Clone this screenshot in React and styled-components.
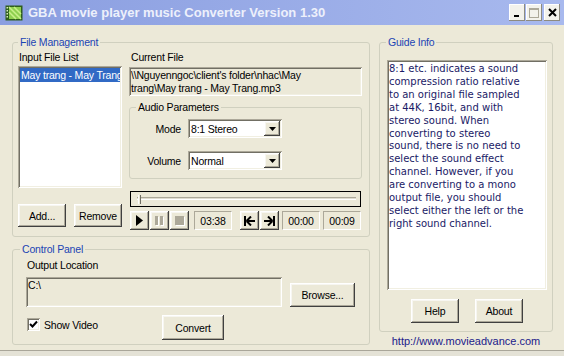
import React from "react";
import styled, { createGlobalStyle, css } from "styled-components";

const GlobalStyle = createGlobalStyle`
  html, body {
    margin: 0;
    padding: 0;
    background: #ece9d8;
  }
  body {
    font-family: "Liberation Sans", Arial, sans-serif;
    font-size: 10.5px;
    letter-spacing: -0.2px;
    color: #000;
  }
  * {
    box-sizing: border-box;
  }
`;

const raised = css`
  background: #ece9d8;
  border: none;
  box-shadow: inset -1px -1px #404040, inset 1px 1px #ffffff,
    inset -2px -2px #aca899, inset 2px 2px #f7f6f1;
`;

const sunken = css`
  border: none;
  box-shadow: inset 1px 1px #aca899, inset -1px -1px #ffffff,
    inset 2px 2px #716f64, inset -2px -2px #f1efe2;
`;

const Window = styled.div`
  width: 564px;
  height: 356px;
  overflow: hidden;
  display: flex;
  flex-direction: column;
  background: #ece9d8;
`;

const TitleBar = styled.div`
  height: 25px;
  flex: none;
  display: flex;
  align-items: center;
  padding: 0 4px 0 5px;
  background: linear-gradient(to right, #8a9ee0, #a8b9ee);
`;

const TitleText = styled.div`
  flex: 1;
  margin-left: 5px;
  color: #edf0fb;
  font: bold 13px "Liberation Sans", Arial, sans-serif;
  letter-spacing: 0;
`;

const CaptionButtons = styled.div`
  display: flex;
  gap: 1px;
`;

const CaptionButton = styled.div`
  width: 16px;
  height: 17px;
  display: flex;
  align-items: center;
  justify-content: center;
  margin-left: ${(p) => p.$gap || 0}px;
  background: #f3f2ec;
  box-shadow: inset -1px -1px #8d8b80, inset 1px 1px #ffffff;
`;

const Body = styled.div`
  display: flex;
  gap: 9px;
  padding: 11px 11px 0 12px;
`;

const BottomEdge = styled.div`
  margin-top: auto;
  height: 6px;
  border-top: 1px solid #a9a699;
  background: #e4e2d6;
`;

const LeftCol = styled.div`
  width: 358px;
  display: flex;
  flex-direction: column;
  gap: 6px;
`;

const RightCol = styled.div`
  width: 174px;
  display: flex;
  flex-direction: column;
`;

const GroupBox = styled.fieldset`
  margin: 0;
  min-width: 0;
  border: 1px solid #d0d0bf;
  border-radius: 3px;
  height: ${(p) => p.$h}px;
  padding: ${(p) => p.$pad};
`;

const Legend = styled.legend`
  padding: 0 2px;
  margin-left: ${(p) => p.$shift || 0}px;
  line-height: 13px;
  height: 13px;
  color: ${(p) => p.$color || "#1b44b4"};
`;

const FileGrid = styled.div`
  display: grid;
  grid-template-columns: 104px 233px;
  column-gap: 7px;
`;

const Column = styled.div`
  display: flex;
  flex-direction: column;
`;

const Label = styled.div`
  line-height: 13px;
  height: 13px;
  margin-left: ${(p) => p.$indent || 0}px;
`;

const ListBox = styled.div`
  ${sunken};
  background: #fff;
  height: 122px;
  margin-top: 2px;
  padding: 2px;
  overflow: hidden;
`;

const ListItem = styled.div`
  height: 14px;
  line-height: 14px;
  padding-left: 1px;
  white-space: nowrap;
  overflow: hidden;
  background: ${(p) => (p.$selected ? "#316ac5" : "transparent")};
  color: ${(p) => (p.$selected ? "#fff" : "#000")};
`;

const ButtonRow = styled.div`
  display: flex;
  justify-content: ${(p) => p.$justify || "flex-start"};
  gap: ${(p) => p.$gap || 8}px;
  margin-top: ${(p) => p.$top || 0}px;
`;

const Button = styled.button`
  ${raised};
  width: ${(p) => p.$w}px;
  height: ${(p) => p.$h || 23}px;
  margin-left: ${(p) => p.$left || 0}px;
  padding: 0;
  font: 10.5px "Liberation Sans", Arial, sans-serif;
  letter-spacing: -0.2px;
  color: #000;
  flex: none;
`;

const ReadBox = styled.div`
  ${sunken};
  background: #ece9d8;
  width: ${(p) => p.$w || "auto"};
  height: ${(p) => p.$h}px;
  margin-top: ${(p) => p.$top || 0}px;
  margin-left: ${(p) => p.$left || 0}px;
  padding: 2px 2px;
  line-height: 13px;
  white-space: pre;
  overflow: hidden;
`;

const ParamRow = styled.div`
  display: grid;
  grid-template-columns: 45px 94px;
  column-gap: 7px;
  align-items: center;
  margin-top: ${(p) => p.$top || 0}px;
`;

const ParamLabel = styled.div`
  text-align: right;
`;

const Combo = styled.div`
  ${sunken};
  background: #fff;
  height: 19px;
  display: flex;
  align-items: center;
  padding: 2px;
`;

const ComboText = styled.div`
  flex: 1;
  padding-left: 1px;
`;

const ComboArrow = styled.div`
  ${raised};
  width: 16px;
  height: 15px;
  display: flex;
  align-items: center;
  justify-content: center;
`;

const Slider = styled.div`
  position: relative;
  width: 231px;
  height: 16px;
  margin: 12px 0 0 1px;
  border: 1px solid #000;
  background: #ece9d8;
`;

const Groove = styled.div`
  position: absolute;
  left: 6px;
  right: 4px;
  top: 5px;
  height: 3px;
  border-top: 1px solid #aca899;
  border-bottom: 1px solid #fff;
  background: #e0ddd0;
`;

const Thumb = styled.div`
  position: absolute;
  left: 7px;
  top: 3px;
  width: 3px;
  height: 9px;
  border-left: 1px solid #fff;
  border-right: 1px solid #716f64;
  background: #ece9d8;
`;

const Controls = styled.div`
  display: flex;
  align-items: center;
  margin: 4px 0 0 1px;
  height: 19px;
`;

const PlayerButton = styled.div`
  ${raised};
  width: 19px;
  height: 19px;
  margin-left: ${(p) => p.$left || 0}px;
  display: flex;
  align-items: center;
  justify-content: center;
  flex: none;
`;

const TimeBox = styled.div`
  width: 38px;
  height: 19px;
  margin-left: ${(p) => p.$left || 0}px;
  border: 1px solid;
  border-color: #aca899 #fff #fff #aca899;
  display: flex;
  align-items: center;
  justify-content: center;
  flex: none;
`;

const OutputRow = styled.div`
  display: flex;
  align-items: flex-end;
  margin-top: 5px;
`;

const OptionRow = styled.div`
  display: flex;
  align-items: flex-start;
  margin-top: 8px;
`;

const CheckWrap = styled.label`
  width: 136px;
  display: flex;
  align-items: center;
  gap: 4px;
  margin-top: 3px;
  padding-left: 1px;
`;

const CheckBox = styled.span`
  ${sunken};
  width: 13px;
  height: 13px;
  background: #fff;
  display: flex;
  align-items: center;
  justify-content: center;
`;

const GuideBox = styled.div`
  ${sunken};
  background: #fff;
  height: 230px;
  padding: 3px 2px;
  font-family: "DejaVu Sans", Verdana, sans-serif;
  font-size: 10px;
  letter-spacing: 0;
  line-height: 12.9px;
  color: #1a1a66;
  white-space: pre;
  overflow: hidden;
`;

const SiteLink = styled.div`
  text-align: center;
  margin-top: 3px;
  font-size: 11px;
  letter-spacing: 0;
  color: #20208a;
`;

const guideText = [
  "8:1 etc. indicates a sound",
  "compression ratio relative",
  "to an original file sampled",
  "at 44K, 16bit, and with",
  "stereo sound. When",
  "converting to stereo",
  "sound, there is no need to",
  "select the sound effect",
  "channel. However, if you",
  "are converting to a mono",
  "output file, you should",
  "select either the left or the",
  "right sound channel.",
].join("\n");

function AppIcon() {
  return (
    <svg width="18" height="16" viewBox="0 0 18 16">
      <rect x="0.5" y="0.5" width="17" height="15" fill="#2f5e1c" />
      <rect x="4" y="2" width="12" height="12" fill="#8fd050" />
      <path d="M4 2 L16 14 M9 2 L16 9 M4 7 L11 14" stroke="#c8f08a" strokeWidth="1.5" />
      {[2, 5, 8, 11].map((y) => (
        <rect key={y} x="1.5" y={y} width="1.5" height="1.5" fill="#d8e8c0" />
      ))}
    </svg>
  );
}

function Arrow() {
  return (
    <svg width="7" height="4" viewBox="0 0 7 4">
      <path d="M0 0 H7 L3.5 4 Z" fill="#000" />
    </svg>
  );
}

function App() {
  return (
    <Window>
      <GlobalStyle />
      <TitleBar>
        <AppIcon />
        <TitleText>GBA movie player music Converter Version 1.30</TitleText>
        <CaptionButtons>
          <CaptionButton>
            <svg width="8" height="10" viewBox="0 0 8 10">
              <rect x="1" y="7" width="5" height="2" fill="#000" />
            </svg>
          </CaptionButton>
          <CaptionButton>
            <svg width="10" height="10" viewBox="0 0 10 10">
              <rect x="0.5" y="0.5" width="9" height="9" fill="none" stroke="#aca899" />
              <rect x="0.5" y="0.5" width="9" height="1.5" fill="#aca899" />
            </svg>
          </CaptionButton>
          <CaptionButton $gap={1}>
            <svg width="9" height="9" viewBox="0 0 9 9">
              <path d="M1 1 L8 8 M8 1 L1 8" stroke="#000" strokeWidth="2" />
            </svg>
          </CaptionButton>
        </CaptionButtons>
      </TitleBar>

      <Body>
        <LeftCol>
          <GroupBox $h={201} $pad="2px 7px 0 5px">
            <Legend>File Management</Legend>
            <FileGrid>
              <Column>
                <Label $indent={1}>Input File List</Label>
                <ListBox>
                  <ListItem $selected>May trang - May Trang</ListItem>
                </ListBox>
                <ButtonRow $top={16}>
                  <Button $w={48}>Add...</Button>
                  <Button $w={48}>Remove</Button>
                </ButtonRow>
              </Column>
              <Column>
                <Label $indent={2}>Current File</Label>
                <ReadBox $h={29} $top={3}>
                  {"\\\\Nguyenngoc\\client's folder\\nhac\\May\ntrang\\May trang - May Trang.mp3"}
                </ReadBox>
                <GroupBox $h={78} $pad="5px 6px 0 6px" style={{ marginTop: 5 }}>
                  <Legend $color="#000">Audio Parameters</Legend>
                  <ParamRow>
                    <ParamLabel>Mode</ParamLabel>
                    <Combo>
                      <ComboText>8:1 Stereo</ComboText>
                      <ComboArrow>
                        <Arrow />
                      </ComboArrow>
                    </Combo>
                  </ParamRow>
                  <ParamRow $top={13}>
                    <ParamLabel>Volume</ParamLabel>
                    <Combo>
                      <ComboText>Normal</ComboText>
                      <ComboArrow>
                        <Arrow />
                      </ComboArrow>
                    </Combo>
                  </ParamRow>
                </GroupBox>
                <Slider>
                  <Groove />
                  <Thumb />
                </Slider>
                <Controls>
                  <PlayerButton>
                    <svg width="7" height="11" viewBox="0 0 7 11">
                      <path d="M0 0 L7 5.5 L0 11 Z" fill="#000" />
                    </svg>
                  </PlayerButton>
                  <PlayerButton $left={1}>
                    <svg width="9" height="10" viewBox="0 0 9 10">
                      <rect x="1" y="1" width="3" height="9" fill="#fff" />
                      <rect x="6" y="1" width="3" height="9" fill="#fff" />
                      <rect x="0" y="0" width="3" height="9" fill="#aca899" />
                      <rect x="5" y="0" width="3" height="9" fill="#aca899" />
                    </svg>
                  </PlayerButton>
                  <PlayerButton $left={1}>
                    <svg width="10" height="10" viewBox="0 0 10 10">
                      <rect x="1" y="1" width="9" height="9" fill="#fff" />
                      <rect x="0" y="0" width="9" height="9" fill="#aca899" />
                    </svg>
                  </PlayerButton>
                  <TimeBox $left={5}>03:38</TimeBox>
                  <PlayerButton $left={8}>
                    <svg width="11" height="10" viewBox="0 0 11 10">
                      <path d="M1 0 V10" stroke="#000" strokeWidth="2" />
                      <path d="M3 5 H11" stroke="#000" strokeWidth="2" />
                      <path d="M2.5 5 L7 0.5 M2.5 5 L7 9.5" stroke="#000" strokeWidth="2" />
                    </svg>
                  </PlayerButton>
                  <PlayerButton $left={1}>
                    <svg width="11" height="10" viewBox="0 0 11 10">
                      <path d="M10 0 V10" stroke="#000" strokeWidth="2" />
                      <path d="M0 5 H8" stroke="#000" strokeWidth="2" />
                      <path d="M8.5 5 L4 0.5 M8.5 5 L4 9.5" stroke="#000" strokeWidth="2" />
                    </svg>
                  </PlayerButton>
                  <TimeBox $left={3}>00:00</TimeBox>
                  <TimeBox $left={3}>00:09</TimeBox>
                </Controls>
              </Column>
            </FileGrid>
          </GroupBox>

          <GroupBox $h={102} $pad="3px 7px 0 13px">
            <Legend $shift={-6}>Control Panel</Legend>
            <Label $indent={1}>Output Location</Label>
            <OutputRow>
              <ReadBox $h={30} $w="256px">C:\</ReadBox>
              <Button $w={65} $h={24} $left={8}>
                Browse...
              </Button>
            </OutputRow>
            <OptionRow>
              <CheckWrap>
                <CheckBox>
                  <svg width="9" height="9" viewBox="0 0 9 9">
                    <path d="M1 4 L3.5 6.5 L8 1.5" stroke="#000" strokeWidth="2" fill="none" />
                  </svg>
                </CheckBox>
                Show Video
              </CheckWrap>
              <Button $w={62} $h={25}>
                Convert
              </Button>
            </OptionRow>
          </GroupBox>
        </LeftCol>

        <RightCol>
          <GroupBox $h={296} $pad="11px 5px 0 7px">
            <Legend $shift={-1}>Guide Info</Legend>
            <GuideBox>{guideText}</GuideBox>
            <ButtonRow $justify="center" $gap={16} $top={9}>
              <Button $w={48} $h={24}>
                Help
              </Button>
              <Button $w={48} $h={24}>
                About
              </Button>
            </ButtonRow>
          </GroupBox>
          <SiteLink>http://www.movieadvance.com</SiteLink>
        </RightCol>
      </Body>
      <BottomEdge />
    </Window>
  );
}

export default App;
